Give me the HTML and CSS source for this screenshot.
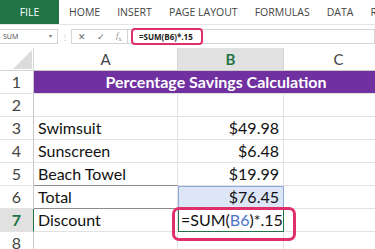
FILE: index.html
```
<!DOCTYPE html>
<html lang="en">
<head>
  <meta charset="UTF-8">
  <meta name="viewport" content="width=device-width, initial-scale=1.0">
  <title>Percentage Savings Calculation</title>
  <link rel="stylesheet" href="styles.css">
</head>
<body>
  <div class="ribbon">
    <div class="tab file">FILE</div>
    <div class="tab">HOME</div>
    <div class="tab">INSERT</div>
    <div class="tab">PAGE LAYOUT</div>
    <div class="tab">FORMULAS</div>
    <div class="tab">DATA</div>
    <div class="tab">REVIEW</div>
  </div>

  <div class="formula-bar">
    <div class="name-box">SUM<span class="arrow">&#9662;</span></div>
    <div class="grip">&#8942;</div>
    <div class="fx-box">
      <span class="fx-btn">&#10005;</span>
      <span class="fx-btn">&#10003;</span>
      <span class="fx-btn fx"><i>f</i><sub>x</sub></span>
    </div>
    <div class="formula-input">
      <span class="formula-text">=SUM(B6)*.15</span>
    </div>
  </div>

  <div class="sheet">
    <div class="corner"><div class="triangle"></div></div>
    <div class="col-head">A</div>
    <div class="col-head active">B</div>
    <div class="col-head">C</div>

    <div class="row-head">1</div>
    <div class="cell title">Percentage Savings Calculation</div>

    <div class="row-head">2</div>
    <div class="cell"></div>
    <div class="cell"></div>
    <div class="cell"></div>

    <div class="row-head">3</div>
    <div class="cell">Swimsuit</div>
    <div class="cell num">$49.98</div>
    <div class="cell"></div>

    <div class="row-head">4</div>
    <div class="cell">Sunscreen</div>
    <div class="cell num">$6.48</div>
    <div class="cell"></div>

    <div class="row-head">5</div>
    <div class="cell rule">Beach Towel</div>
    <div class="cell num">$19.99</div>
    <div class="cell"></div>

    <div class="row-head">6</div>
    <div class="cell rule">Total</div>
    <div class="cell num ref">$76.45</div>
    <div class="cell"></div>

    <div class="row-head active">7</div>
    <div class="cell">Discount</div>
    <div class="cell editing">
      <span>=SUM(<span class="ref-text">B6</span>)*.15</span>
      <div class="callout"></div>
    </div>
    <div class="cell"></div>

    <div class="row-head">8</div>
    <div class="cell"></div>
    <div class="cell"></div>
    <div class="cell"></div>
  </div>
</body>
</html>
```

FILE: styles.css
```
body {
  margin: 0;
  background-color: #fff;
  font-family: "Open Sans", "Noto Sans", sans-serif;
  color: #222;
  overflow: hidden;
  width: 375px;
  height: 249px;
}

/* ribbon tabs */
.ribbon {
  display: flex;
  align-items: stretch;
  gap: 17px;
  height: 24px;
  border-bottom: 1px solid #e6e6e6;
  white-space: nowrap;
  overflow: hidden;
}
.tab {
  flex-shrink: 0;
  display: flex;
  align-items: center;
  font-size: 10.5px;
  color: #444;
}
.file {
  width: 59px;
  justify-content: center;
  background-color: #217346;
  color: #fff;
  margin-right: -7px;
}

/* formula bar */
.formula-bar {
  display: flex;
  align-items: center;
  height: 20px;
  padding-top: 1px;
}
.name-box {
  display: flex;
  align-items: center;
  justify-content: space-between;
  width: 54px;
  height: 13px;
  padding-left: 3px;
  border: 1px solid #d4d4d4;
  border-left: none;
  font-size: 7px;
  color: #444;
}
.arrow {
  font-size: 6px;
  color: #777;
  margin-right: 5px;
}
.grip {
  width: 13px;
  text-align: center;
  font-size: 8px;
  color: #bbb;
}
.fx-box {
  display: flex;
  align-items: center;
  justify-content: space-around;
  width: 55px;
  height: 13px;
  border: 1px solid #d4d4d4;
  border-right: none;
  font-size: 9px;
  color: #666;
}
.fx {
  font-family: "Liberation Serif", serif;
  font-size: 9px;
  color: #888;
}
.fx sub {
  font-size: 6px;
}
.formula-input {
  flex: 1;
  display: flex;
  align-items: center;
  height: 13px;
  border: 1px solid #d4d4d4;
  padding-left: 3px;
}
.formula-text {
  font-size: 8px;
  font-weight: 700;
  color: #222;
  padding: 1px 8px 1px 6px;
  border: 2px solid #e0306b;
  border-radius: 4px;
}

/* worksheet grid */
.sheet {
  display: grid;
  grid-template-columns: 34px 144px 106px 110px;
  grid-auto-rows: 23px;
  margin-top: 2px;
  font-family: Lato, "Open Sans", sans-serif;
}
.corner {
  border-right: 1px solid #d4d4d4;
  border-bottom: 1px solid #d4d4d4;
}
.triangle {
  margin: 2px 0 0 13px;
  width: 0;
  height: 0;
  border-left: 19px solid transparent;
  border-bottom: 19px solid #dcdcdc;
}
.col-head {
  display: flex;
  align-items: center;
  justify-content: center;
  font-size: 15px;
  color: #444;
  border-right: 1px solid #d4d4d4;
  border-bottom: 1px solid #c8c8c8;
}
.col-head.active {
  background-color: #e1e1e1;
  color: #217346;
  font-weight: 700;
}
.row-head {
  display: flex;
  align-items: flex-end;
  justify-content: center;
  padding-bottom: 2px;
  font-size: 16px;
  color: #444;
  border-right: 1px solid #c8c8c8;
  border-bottom: 1px solid #e2e2e2;
}
.row-head.active {
  background-color: #e1e1e1;
  color: #217346;
  font-weight: 700;
  border-right: 1px solid #217346;
}
.cell {
  display: flex;
  align-items: flex-end;
  padding: 0 4px 2px;
  font-size: 16px;
  line-height: 18px;
  color: #111;
  border-right: 1px solid #e2e2e2;
  border-bottom: 1px solid #e2e2e2;
  white-space: nowrap;
}
.cell.title {
  grid-column: span 3;
  justify-content: center;
  align-items: center;
  padding: 0 0 0 4px;
  background-color: #7030a0;
  color: #fff;
  font-weight: 700;
  border-right: none;
}
.cell.num {
  justify-content: flex-end;
}
.cell.rule {
  border-bottom: 1px solid #8c8c8c;
}
.cell.ref {
  background-color: #dde6f7;
  border: 1px solid #8fa9dc;
  border-bottom-color: #8c8c8c;
}
.cell.editing {
  position: relative;
  padding-left: 2px;
  border: 1px solid #217346;
}
.ref-text {
  color: #4a74c9;
}
.callout {
  position: absolute;
  left: -7px;
  top: -3px;
  right: -13px;
  bottom: -10px;
  border: 3px solid #e0306b;
  border-radius: 7px;
}
```
